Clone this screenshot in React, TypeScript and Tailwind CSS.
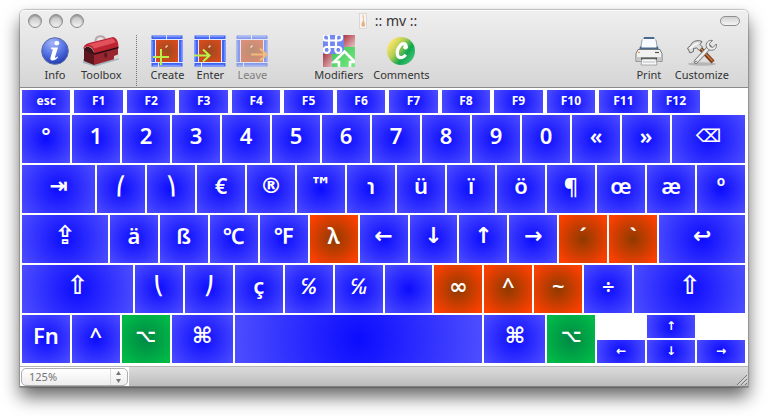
import type { ReactNode } from "react";

type Tone = "blue" | "orange" | "green";

const TONES: Record<Tone, string> = {
  blue: "bg-[radial-gradient(circle_farthest-corner_at_center,#0c0cff,#4e4eff)]",
  orange: "bg-[radial-gradient(circle_farthest-corner_at_center,#8f3a00,#ff4000_90%)]",
  green: "bg-[radial-gradient(circle_farthest-corner_at_center,#008845,#00b947_85%)]",
};

const SPANS = {
  1: "grow-[48]",
  cmd: "grow-[61]",
  wide: "grow-[73]",
  caps: "grow-[86]",
  shift: "grow-[111]",
  space: "grow-[248]",
};

const TEXT_FACE = "pb-2 font-['Noto_Sans','DejaVu_Sans',sans-serif] text-[22px] font-semibold";
const SYMBOL_FACE = "pb-1.5 font-['DejaVu_Sans',sans-serif] text-[22px] font-bold";
const SMALL_SYMBOL_FACE = "pb-1.5 font-['DejaVu_Sans',sans-serif] text-lg font-bold";
const LARGE_SYMBOL_FACE = "pb-2 font-['DejaVu_Sans',sans-serif] text-[26px] font-bold";
const SLANTED_FACE = "pb-1.5 font-['DejaVu_Sans',sans-serif] text-lg font-bold italic";
const FRACTION_FACE = "pb-2 font-['Noto_Sans','DejaVu_Sans',sans-serif] text-[22px] font-semibold italic";

interface KeySpec {
  label: string;
  name?: string;
  tone?: Tone;
  span?: keyof typeof SPANS;
  face?: string;
}

type Rest = Omit<KeySpec, "label">;

const k = (label: string, rest: Rest = {}): KeySpec => ({ label, ...rest });
const sym = (label: string, rest: Rest = {}): KeySpec => ({ label, face: SYMBOL_FACE, ...rest });
const small = (label: string, rest: Rest = {}): KeySpec => ({ label, face: SMALL_SYMBOL_FACE, ...rest });
const large = (label: string, rest: Rest = {}): KeySpec => ({ label, face: LARGE_SYMBOL_FACE, ...rest });
const slanted = (label: string): KeySpec => ({ label, face: SLANTED_FACE });
const fraction = (label: string): KeySpec => ({ label, face: FRACTION_FACE });

const FUNCTION_KEYS = ["esc", "F1", "F2", "F3", "F4", "F5", "F6", "F7", "F8", "F9", "F10", "F11", "F12"];

const ROWS: KeySpec[][] = [
  [
    k("°"), k("1"), k("2"), k("3"), k("4"), k("5"), k("6"), k("7"), k("8"), k("9"), k("0"), k("«"), k("»"),
    small("⌫", { span: "wide", name: "Delete" }),
  ],
  [
    sym("⇥", { span: "wide", name: "Tab" }),
    slanted("⎛"), slanted("⎞"), k("€"), sym("®"), sym("™"), k("℩"),
    k("ü"), k("ï"), k("ö"), k("¶"), k("œ"), k("æ"), k("º"),
  ],
  [
    large("⇪", { span: "caps", name: "Caps lock" }),
    k("ä"), k("ß"), k("℃"), k("℉"), k("λ", { tone: "orange" }),
    sym("←"), sym("↓"), sym("↑"), sym("→"), k("´", { tone: "orange" }), k("`", { tone: "orange" }),
    sym("↩", { span: "caps", name: "Return" }),
  ],
  [
    large("⇧", { span: "shift", name: "Left shift" }),
    slanted("⎝"), slanted("⎠"), k("ç"), fraction("℅"), fraction("℆"), k("\u00a0", { name: "No-break space" }),
    k("∞", { tone: "orange" }), k("^", { tone: "orange" }), k("~", { tone: "orange" }), k("÷"),
    large("⇧", { span: "shift", name: "Right shift" }),
  ],
];

const BOTTOM_ROW: KeySpec[] = [
  k("Fn"),
  k("^", { name: "Control" }),
  small("⌥", { tone: "green", name: "Left option" }),
  sym("⌘", { span: "cmd", name: "Left command" }),
  k("\u00a0", { span: "space", name: "Space" }),
  sym("⌘", { span: "cmd", name: "Right command" }),
  small("⌥", { tone: "green", name: "Right option" }),
];

function Key({ label, name, tone = "blue", span = 1, face = TEXT_FACE }: KeySpec) {
  return (
    <button
      type="button"
      aria-label={name}
      className={`flex h-12 min-w-0 basis-0 items-center justify-center text-white ${SPANS[span]} ${TONES[tone]} ${face}`}
    >
      <span className="leading-6">{label}</span>
    </button>
  );
}

function SmallKey({ label, className }: { label: string; className: string }) {
  return (
    <button type="button" className={`flex h-[23px] min-w-0 items-center justify-center pb-0.5 text-white ${TONES.blue} ${className}`}>
      {label}
    </button>
  );
}

const ARROW_FACE = "font-['DejaVu_Sans',sans-serif] text-xs font-bold leading-4";

function Icon({ children }: { children: ReactNode }) {
  return (
    <svg viewBox="0 0 32 32" className="size-8" aria-hidden="true">
      {children}
    </svg>
  );
}

function InfoIcon() {
  return (
    <Icon>
      <defs>
        <radialGradient id="info" cx=".4" cy=".2" r=".85">
          <stop offset="0" stopColor="#a3b4f8" />
          <stop offset=".55" stopColor="#5270e2" />
          <stop offset="1" stopColor="#1c35ab" />
        </radialGradient>
      </defs>
      <circle cx="16" cy="16" r="13.3" fill="url(#info)" stroke="#5d6ba8" />
      <circle cx="17.8" cy="8.2" r="2.4" fill="#fff" />
      <path d="M12 12.500h7l-3 9.500c-.2 1 .8 1 2.400-.6l.7.8c-2 2.400-3.800 3.200-5.600 3.200-2.200 0-2.400-1.700-1.900-3.200l2-6.600c.3-1.200-.3-1.700-1.800-1.900z" fill="#fff" />
    </Icon>
  );
}

function ToolboxIcon() {
  return (
    <svg viewBox="0 0 38 32" className="h-8 w-[38px]" aria-hidden="true">
      <path d="M1 24v4l12 3.500 24-7V20z" fill="#93a9b2" opacity=".8" />
      <path d="M13.500 6.500c0-3.500 1.500-5 4.500-5.200s4.500 1 5 3" fill="none" stroke="#b7a5aa" strokeWidth="2" />
      <path d="M2 13l10 5v12L2 26z" fill="#5f151f" />
      <path d="M12 18l24-6v11L12 30z" fill="#98252f" />
      <path d="M1 14C2 10 4 9 7 8l24-6c4 1 5.500 5 5.500 10L12 18.500C12 15 10 12 6 11.500c-2 0-3.500 1-5 2.500z" fill="#bd2432" />
      <path d="M6 9.500L30 3.500c2 .5 3 2 3.500 4L12 13.500C11 11 9 10 6 9.500z" fill="#e2525d" />
      <path d="M2 15c1-3 3-4 5-3 3 1 4 3 5.500 6.500v1.500z" fill="#39161c" />
      <path d="M12.500 19l24-6.500" stroke="#2d0b10" strokeWidth="1.400" />
      <path d="M22 18.500l3-.8V22l-2 .8z" fill="#541820" />
      <path d="M32 21l5-2v4.500l-5 1z" fill="#d8d8d8" />
    </svg>
  );
}

function StateIcon({ arrow, color }: { arrow: string; color: string }) {
  return (
    <Icon>
      <defs>
        <radialGradient id="state" cx=".5" cy=".5" r=".75">
          <stop offset="0" stopColor="#9a4a1e" />
          <stop offset="1" stopColor="#e64a1c" />
        </radialGradient>
      </defs>
      <rect x=".5" y=".5" width="31" height="31" fill="#3f63f2" />
      <path d="M2 1.500h28M2 30.500h28M1 6v20M31 6v20" stroke="#7b96ff" strokeWidth="1.500" />
      <path d="M0 4.500h32M0 27.500h32M4.500 5v22M27.500 5v22M15.500 0v5M7.500 27v5" stroke="#e3e8ff" strokeWidth="1" />
      <rect x="5" y="5" width="22" height="22" fill="url(#state)" />
      <path d="M14.500 12.500l2-2" stroke="#f7dccb" strokeWidth="1.300" />
      <path d={arrow} fill="none" stroke={color} strokeWidth="2" />
    </Icon>
  );
}

function ModifiersIcon() {
  return (
    <Icon>
      <defs>
        <linearGradient id="redTop" x1="0" y1="0" x2="1" y2="1">
          <stop offset="0" stopColor="#b2343f" />
          <stop offset="1" stopColor="#e3c7c9" />
        </linearGradient>
        <linearGradient id="redLow" x1="0" y1="0" x2="1" y2="1">
          <stop offset="0" stopColor="#a93a46" />
          <stop offset="1" stopColor="#dfb9bc" />
        </linearGradient>
        <linearGradient id="greenLow" x1="0" y1="0" x2="1" y2="1">
          <stop offset="0" stopColor="#3cc552" />
          <stop offset="1" stopColor="#7ae887" />
        </linearGradient>
      </defs>
      <rect width="21" height="19" fill="#7286f0" />
      <rect x="21" width="11" height="12" fill="url(#redTop)" />
      <rect y="19" width="9" height="13" fill="url(#redLow)" />
      <path d="M21 12h11v20H9V19h12z" fill="url(#greenLow)" />
      <path
        d="M6 5.500h7v6.500h-7zM6 5.500V2.500a3 3 0 1 0-3 3zM13 5.500V2.500a3 3 0 1 1 3 3zM6 12v1a3 3 0 1 1-3-1zM13 12v1a3 3 0 1 0 3-1z"
        fill="none"
        stroke="#fff"
        strokeWidth="2.200"
      />
      <path d="M16 32v-5h-5l10.500-10.500L32 27h-5v5" fill="none" stroke="#fff" strokeWidth="2.600" />
    </Icon>
  );
}

function CommentsIcon() {
  return (
    <Icon>
      <defs>
        <linearGradient id="comments" x1=".1" y1=".2" x2=".9" y2=".8">
          <stop offset="0" stopColor="#fbe56a" />
          <stop offset=".35" stopColor="#b6cf52" />
          <stop offset=".7" stopColor="#10a650" />
          <stop offset="1" stopColor="#3fbf72" />
        </linearGradient>
      </defs>
      <circle cx="16" cy="16" r="14" fill="url(#comments)" />
      <path d="M21 12.500c.8-4-3-5-5.800-2-3 3.400-4 9-1.700 11.300 2 1.800 5 .6 7.300-2.100" fill="none" stroke="#fff" strokeWidth="3.200" />
      <circle cx="20.500" cy="12.300" r="2.300" fill="#fff" />
    </Icon>
  );
}

function PrintIcon() {
  return (
    <Icon>
      <path d="M11 2h10l1 3H10z" fill="#49698f" />
      <path d="M9 5h14l1.500 9h-17z" fill="#edf3f9" stroke="#7e8b99" strokeWidth=".8" />
      <path d="M7 11.500h18l1 3.500H6z" fill="#496b8e" />
      <path d="M10 4h12l1.500 8.500h-15z" fill="#f8fbff" />
      <path d="M5 14.500h22l2 4v8H3v-8z" fill="#f2f2f1" stroke="#77797b" />
      <path d="M3.500 22h25v4.500h-25z" fill="#c6c7c8" />
      <path d="M8 22.500h16V25H8z" fill="#4d4d4d" />
      <path d="M9 24h14l1 6H8z" fill="#f7f7f7" stroke="#8d8d8d" strokeWidth=".7" />
      <path d="M10 27h12" stroke="#b9bfc6" />
      <circle cx="6" cy="17.500" r=".8" fill="#e07b1e" />
      <path d="M22 17.500h4" stroke="#555" strokeWidth="1.200" />
    </Icon>
  );
}

function CustomizeIcon() {
  return (
    <Icon>
      <ellipse cx="16" cy="29" rx="14" ry="1.700" fill="#a5a5a5" opacity=".7" />
      <path d="M13 12l14 15" stroke="#7c3d18" strokeWidth="4.200" />
      <path d="M13 11.500l13.500 14.500" stroke="#c87a42" strokeWidth="1.400" />
      <path d="M10 26.500L23.500 12" stroke="#777" strokeWidth="4.600" strokeLinecap="round" />
      <path d="M10 26.500L23.500 12" stroke="#ececec" strokeWidth="2.800" strokeLinecap="round" />
      <path d="M26.500 5.500c-4-1-7.500 2.500-6 6.500 1.500 3.500 6.500 4.500 9 1.500 1-1.300 1.300-3 .8-4.500L27 12.500l-3-1-.6-3z" fill="#ededed" stroke="#707070" strokeWidth=".9" />
      <path d="M1.500 13l2.500 5 3.500-1.500 0-3 3-.5 3 2.500 3-3.500-2.500-2.500 2-3c-3-1.500-7-1-9.500 1l-2 3z" fill="#dcdcdc" stroke="#5e5e5e" strokeWidth=".9" />
      <path d="M4 13.500l3.500-3 5-2.500" stroke="#fff" strokeWidth="1.200" fill="none" />
      <circle cx="10" cy="26.500" r=".8" fill="#666" />
    </Icon>
  );
}

function Tool({ label, disabled = false, children }: { label: string; disabled?: boolean; children: ReactNode }) {
  return (
    <button type="button" disabled={disabled} className={`flex flex-col items-center px-[5px] ${disabled ? "opacity-55" : ""}`}>
      {children}
      <span className="text-[11px] leading-4">{label}</span>
    </button>
  );
}

function TitleBar() {
  return (
    <div className="relative flex h-5 items-center justify-between px-2">
      <div className="flex gap-[7px]">
        {["Close", "Minimize", "Zoom"].map((name) => (
          <button
            key={name}
            type="button"
            aria-label={name}
            className="size-3.5 rounded-full border border-[#8b8b8b] bg-linear-to-b from-[#bdbdbd] to-[#f4f4f4] shadow-[inset_0_1px_2px_#888]"
          />
        ))}
      </div>
      <h1 className="absolute inset-x-0 flex items-center justify-center gap-2 pl-2 text-sm leading-4 font-normal">
        <svg viewBox="0 0 8 16" className="h-4 w-2" aria-hidden="true">
          <rect x=".5" y=".5" width="7" height="15" fill="#f8f5f0" stroke="#c9c9c9" strokeWidth=".6" />
          <path d="M3.500 1.500l.6 6c-1 2-2 3-1.600 5 .6 1.800 3 1.800 3.500 0 .4-2-.8-3-1.200-5l-.2-5.500" fill="#e5b184" />
        </svg>
        :: mv ::
      </h1>
      <button
        type="button"
        aria-label="Toggle toolbar"
        className="h-2.5 w-5 rounded-full border border-[#8e8e8e] bg-linear-to-b from-[#d2d2d2] to-[#f4f4f4]"
      />
    </div>
  );
}

function Toolbar() {
  return (
    <div className="flex items-start px-3.5 pt-1">
      <Tool label="Info"><InfoIcon /></Tool>
      <Tool label="Toolbox"><ToolboxIcon /></Tool>
      <div className="mx-[9px] h-[51px] border-l border-dotted border-[#777]" />
      <Tool label="Create"><StateIcon arrow="M10 14v16M2 22h16" color="#b9f04a" /></Tool>
      <Tool label="Enter"><StateIcon arrow="M0 20.500h15M9 14.500l6.500 6-6.500 6" color="#b9f04a" /></Tool>
      <Tool label="Leave" disabled><StateIcon arrow="M15 19.500h15M24 13.500l6.500 6-6.500 6" color="#ff9b26" /></Tool>
      <div className="w-9" />
      <Tool label="Modifiers"><ModifiersIcon /></Tool>
      <Tool label="Comments"><CommentsIcon /></Tool>
      <div className="grow" />
      <Tool label="Print"><PrintIcon /></Tool>
      <Tool label="Customize"><CustomizeIcon /></Tool>
    </div>
  );
}

function Keyboard() {
  return (
    <main className="flex flex-col gap-0.5 bg-white pt-0.5 pr-[3px] pb-[3px] pl-0.5">
      <div className="flex gap-1 pr-[45px]">
        {FUNCTION_KEYS.map((label) => (
          <SmallKey key={label} label={label} className="grow basis-0 text-xs font-bold leading-4" />
        ))}
      </div>
      {ROWS.map((row, r) => (
        <div key={r} className="flex gap-0.5">
          {row.map((key, i) => (
            <Key key={i} {...key} />
          ))}
        </div>
      ))}
      <div className="flex gap-0.5">
        {BOTTOM_ROW.map((key, i) => (
          <Key key={i} {...key} />
        ))}
        <div className="grid grow-[148] basis-0 grid-cols-3 gap-0.5">
          <SmallKey label="↑" className={`col-start-2 ${ARROW_FACE}`} />
          <SmallKey label="←" className={`col-start-1 ${ARROW_FACE}`} />
          <SmallKey label="↓" className={ARROW_FACE} />
          <SmallKey label="→" className={ARROW_FACE} />
        </div>
      </div>
    </main>
  );
}

function StatusBar() {
  return (
    <footer className="flex h-[21px] items-end justify-between border-t border-b border-t-[#b5b5b5] border-b-[#808080] bg-linear-to-b from-[#dcdcdc] to-[#bcbcbc]">
      <div className="flex h-full items-center bg-white px-px">
        <div className="relative">
          <select
            aria-label="Zoom level"
            defaultValue="125"
            className="block h-[18px] w-[107px] appearance-none rounded-[5px] border border-[#b0b0b0] bg-linear-to-b from-white to-[#ededed] pl-[7px] text-[11px] leading-4 text-[#747474]"
          >
            <option value="100">100%</option>
            <option value="125">125%</option>
            <option value="150">150%</option>
          </select>
          <svg viewBox="0 0 18 18" className="pointer-events-none absolute top-0 right-0 size-[18px]" aria-hidden="true">
            <path d="M.5 1v16" stroke="#dadada" />
            <path d="M6 7l2.500-4L11 7zM6 11l2.500 4 2.500-4z" fill="#777" />
          </svg>
        </div>
      </div>
      <svg viewBox="0 0 12 12" className="size-3" aria-hidden="true">
        <path d="M1 11L11 1M5 11l6-6M9 11l2-2" stroke="#777" />
        <path d="M2.500 11L11 2.500M6.500 11L11 6.500" stroke="#eee" strokeWidth=".7" />
      </svg>
    </footer>
  );
}

export default function App() {
  return (
    <div className="bg-white px-5 pt-2.5 pb-[29px] font-['Noto_Sans','DejaVu_Sans',sans-serif] text-[#333]">
      <div className="rounded-t-[5px] shadow-[0_10px_18px_rgba(0,0,0,0.6),0_0_1px_1px_rgba(0,0,0,0.2)]">
        <header className="h-[78px] rounded-t-[5px] border-t border-b border-t-[#fafafa] border-b-[#8a8a8a] bg-linear-to-b from-[#efefef] to-[#d6d6d6]">
          <TitleBar />
          <Toolbar />
        </header>
        <Keyboard />
        <StatusBar />
      </div>
    </div>
  );
}
